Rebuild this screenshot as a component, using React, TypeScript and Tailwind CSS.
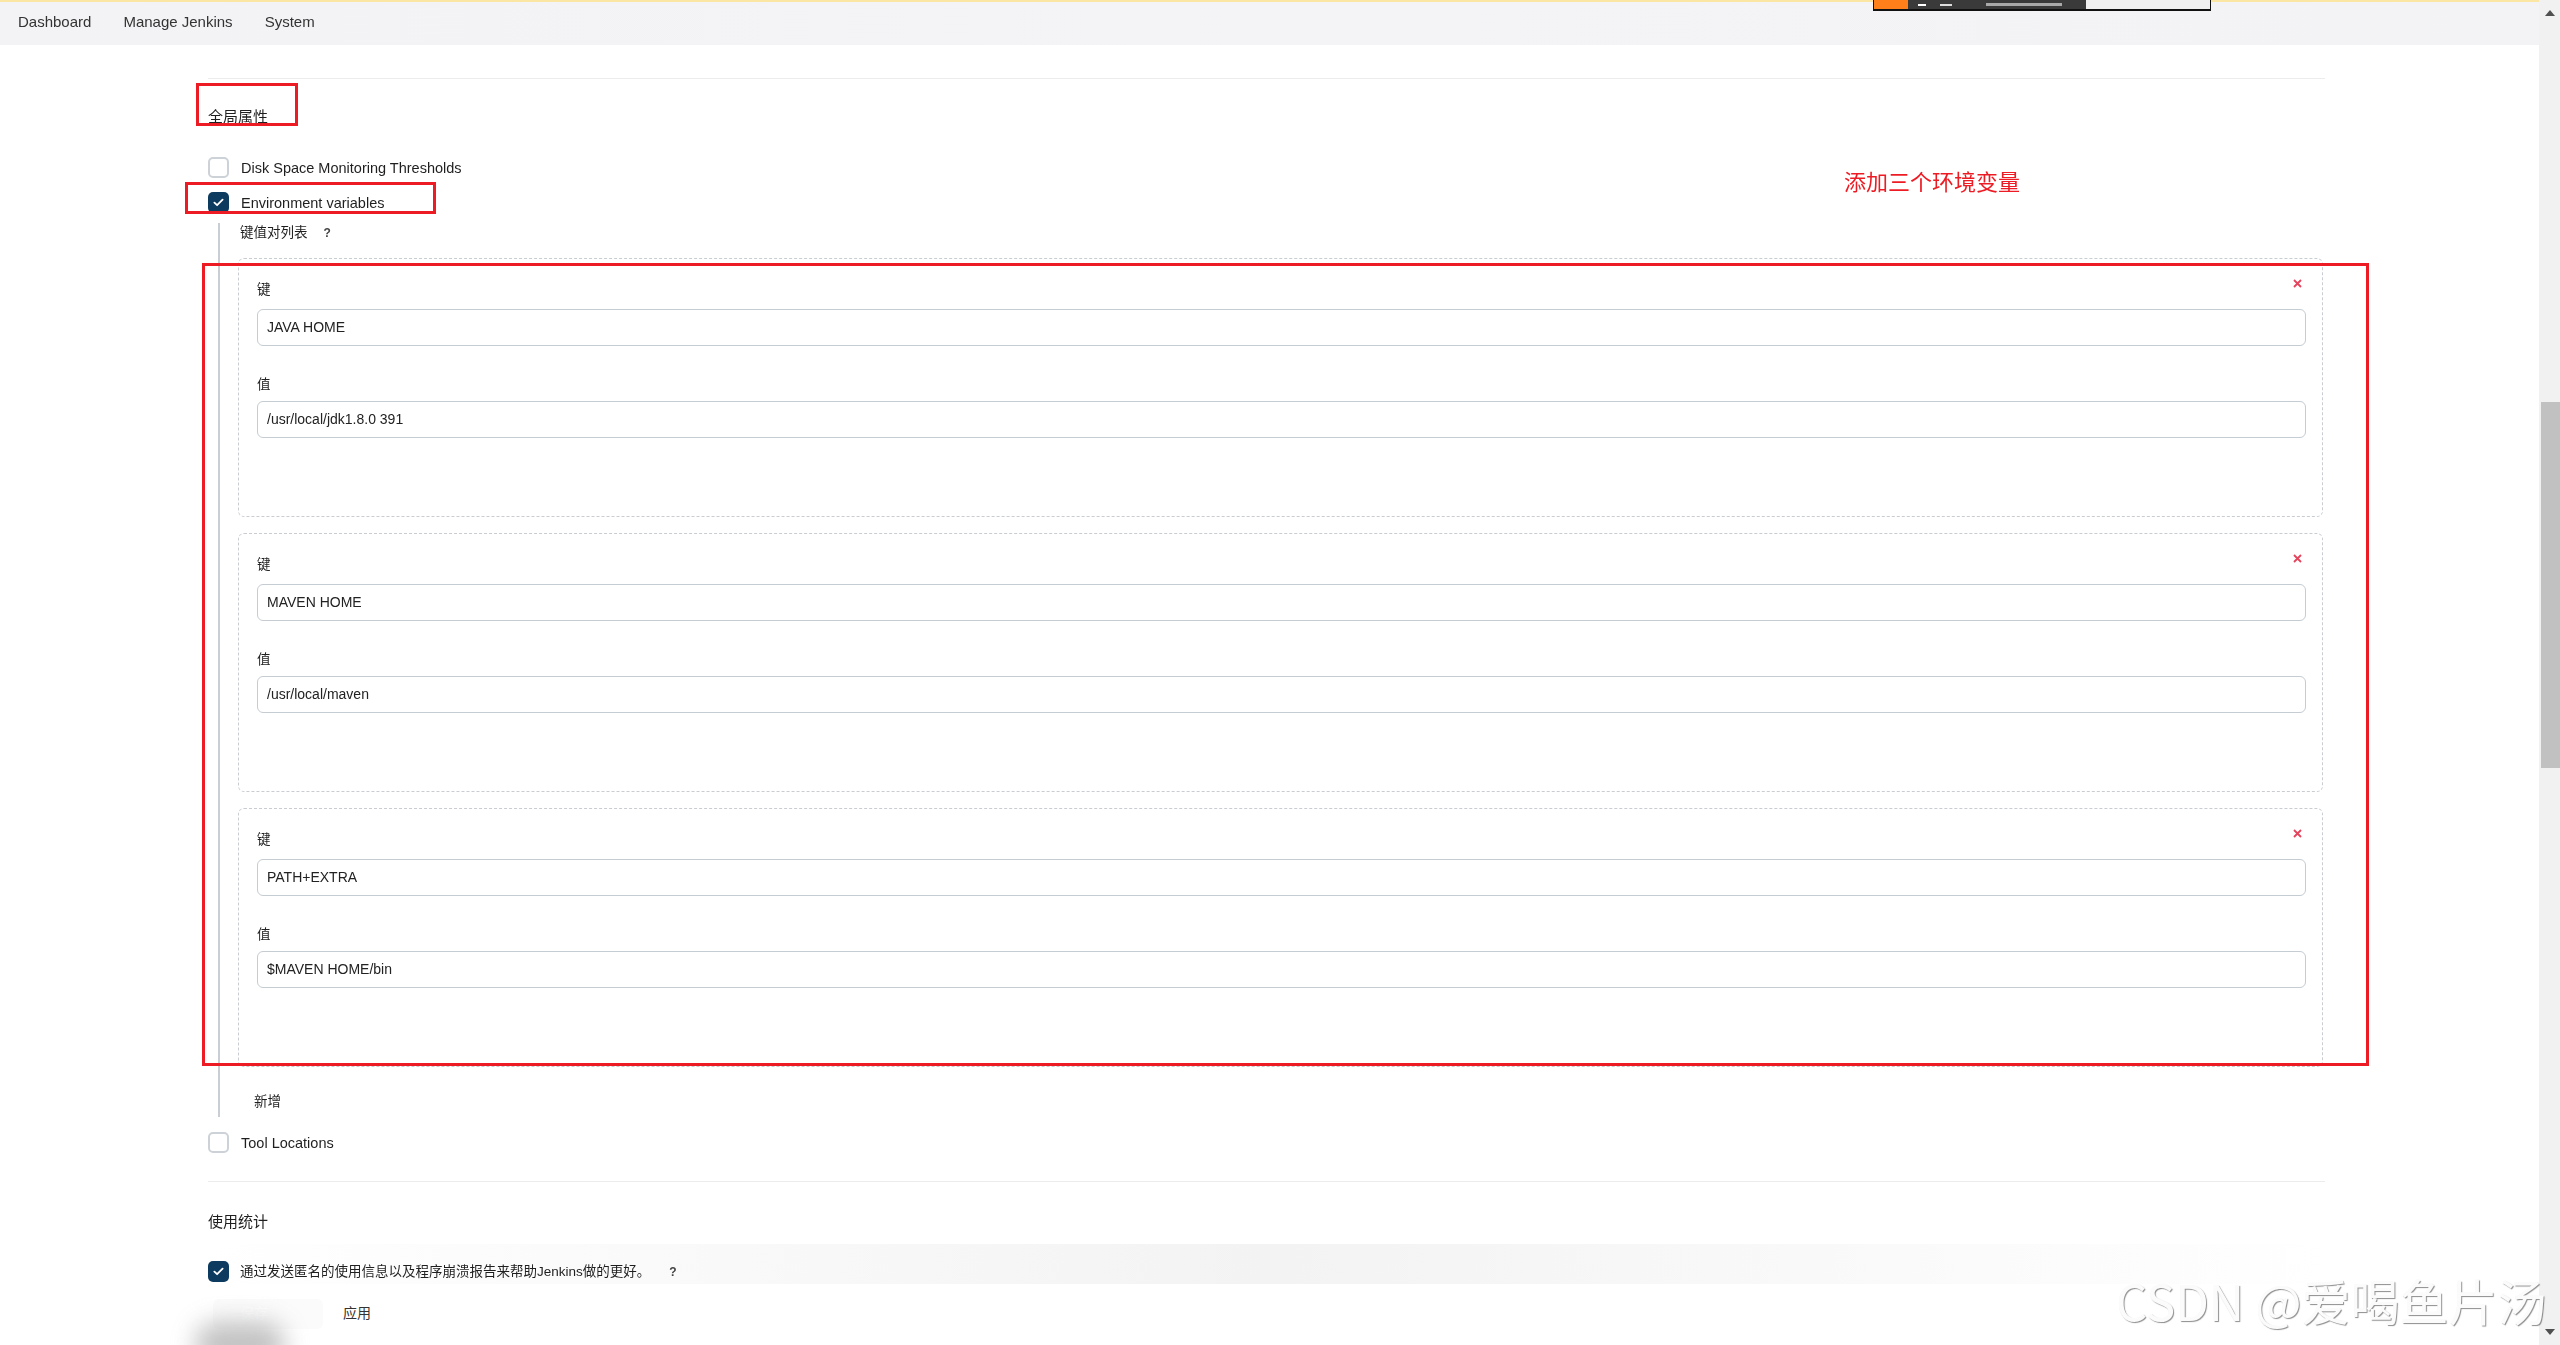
import React from "react";

type EnvVar = { key: string; value: string };

const envVars: EnvVar[] = [
  { key: "JAVA HOME", value: "/usr/local/jdk1.8.0 391" },
  { key: "MAVEN HOME", value: "/usr/local/maven" },
  { key: "PATH+EXTRA", value: "$MAVEN HOME/bin" },
];

function Checkbox({ checked }: { checked?: boolean }) {
  if (checked) {
    return (
      <span className="flex h-[21px] w-[21px] shrink-0 items-center justify-center rounded-[5px] bg-[#0d3b5f]">
        <svg width="11" height="9" viewBox="0 0 11 9" fill="none">
          <path d="M1.4 4.7 4.1 7.2 9.6 1.6" stroke="white" strokeWidth="1.8" strokeLinecap="round" strokeLinejoin="round" />
        </svg>
      </span>
    );
  }
  return <span className="h-[21px] w-[21px] shrink-0 rounded-[5px] border-2 border-[#ccd2d7] bg-white" />;
}

function Field({ label, value, gap }: { label: string; value: string; gap: string }) {
  return (
    <>
      <div className="h-[20px] text-[13.5px] leading-[20px] text-[#222]">{label}</div>
      <div className={`${gap} flex h-[37px] items-center rounded-[6px] border border-[#c5ccd2] bg-white px-[9px] text-[14px] text-[#222]`}>
        {value}
      </div>
    </>
  );
}

function EnvCard({ item }: { item: EnvVar }) {
  return (
    <div className="relative h-[259px] rounded-[6px] border border-dashed border-[#c9cdd1] pl-[18px] pr-[16px] pt-[21px]">
      {/* delete */}
      <svg className="absolute right-[20px] top-[20px]" width="9" height="9" viewBox="0 0 9 9">
        <path d="M1 1 8 8M8 1 1 8" stroke="#e5445c" strokeWidth="1.8" />
      </svg>
      <Field label="键" value={item.key} gap="mt-[9px]" />
      <div className="h-[29px]" />
      <Field label="值" value={item.value} gap="mt-[6px]" />
    </div>
  );
}

export default function App() {
  return (
    <div className="relative flex h-[1345px] w-[2560px] overflow-hidden bg-white font-['Liberation_Sans','Noto_Sans_CJK_SC',sans-serif] text-[#1f1f1f]">
      {/* Page */}
      <div className="flex min-w-0 flex-1 flex-col">
        {/* Breadcrumbs */}
        <div className="flex h-[45px] shrink-0 flex-col bg-gradient-to-r from-[#f3f3f5] via-[#f4f4f6] to-[#f3f3f5]">
          <div className="h-[2px] bg-[#fbe7a3]" />
          <div className="flex flex-1 items-center gap-[32px] pb-[2px] pl-[18px] text-[15px] text-[#333]">
            <span>Dashboard</span>
            <span>Manage Jenkins</span>
            <span>System</span>
          </div>
        </div>

        <div className="pl-[208px] pr-[214px] pt-[33px]">
          {/* 全局属性 */}
          <div className="border-t border-[#ececec] pt-[28px]">
            <div className="h-[20px] text-[15px] leading-[20px]">全局属性</div>

            <div className="mt-[30px] flex h-[21px] items-center gap-[12px] text-[14.5px] leading-[20px]">
              <Checkbox />
              <span>Disk Space Monitoring Thresholds</span>
            </div>
            <div className="mt-[14px] flex h-[21px] items-center gap-[12px] text-[14.5px] leading-[20px]">
              <Checkbox checked />
              <span>Environment variables</span>
            </div>

            <div className="ml-[10px] mt-[10px] border-l-2 border-[#c8ced3] pb-[5px] pl-[18px] pr-[2px]">
              <div className="flex h-[20px] items-center gap-[16px] pl-[2px] text-[13.5px] leading-[20px]">
                <span>键值对列表</span>
                <span className="text-[12px] font-bold text-[#444]">?</span>
              </div>
              <div className="mt-[15px] flex flex-col gap-[16px]">
                {envVars.map((v) => (
                  <EnvCard key={v.key} item={v} />
                ))}
              </div>
              <div className="mt-[25px] h-[20px] pl-[16px] text-[13.5px] leading-[20px]">新增</div>
            </div>

            <div className="mt-[15px] flex h-[21px] items-center gap-[12px] text-[14.5px] leading-[20px]">
              <Checkbox />
              <span>Tool Locations</span>
            </div>
          </div>

          {/* 使用统计 */}
          <div className="mt-[28px] border-t border-[#ececec] pt-[30px]">
            <div className="h-[20px] text-[15px] leading-[20px]">使用统计</div>
            <div className="mt-[29px] flex h-[21px] items-center gap-[11px] text-[13.5px] leading-[20px]">
              <Checkbox checked />
              <span>通过发送匿名的使用信息以及程序崩溃报告来帮助Jenkins做的更好。</span>
              <span className="ml-[8px] text-[12px] font-bold text-[#444]">?</span>
            </div>
          </div>
        </div>
      </div>

      {/* Scrollbar */}
      <div className="flex w-[21px] shrink-0 flex-col bg-[#f1f1f1]">
        <div className="flex h-[26px] items-center justify-center">
          <span className="h-0 w-0 border-x-[5px] border-b-[6px] border-x-transparent border-b-[#505050]" />
        </div>
        <div className="ml-[2px] mt-[376px] h-[366px] bg-[#c1c1c1]" />
        <div className="flex-1" />
        <div className="flex h-[26px] items-center justify-center">
          <span className="h-0 w-0 border-x-[5px] border-t-[6px] border-x-transparent border-t-[#505050]" />
        </div>
      </div>

      {/* Sticky bottom bar */}
      <div className="absolute left-[200px] top-[1244px] h-[40px] w-[2140px] bg-gradient-to-r from-white via-[#f3f3f3] to-white mix-blend-multiply" />
      <div className="absolute bottom-0 left-0 flex h-[61px] w-[2539px] items-center bg-white pb-[2px] pl-[213px]">
        <div className="flex h-[30px] w-[110px] items-center rounded-[6px] bg-[#fbfbfb] pl-[27px] text-[14px] text-white">保存</div>
        <span className="ml-[20px] text-[14px] text-[#333]">应用</span>
      </div>
      <div className="absolute left-[195px] top-[1322px] h-[44px] w-[90px] rounded-full bg-[#a9a9a9] opacity-70 blur-[12px]" />

      {/* Screenshot tool overlay */}
      <div className="absolute left-[1873px] top-0 flex h-[11px] w-[338px] border-b-2 border-[#111] bg-[#111] px-[1px]">
        <div className="w-[34px] bg-[#ff7f1a]" />
        <div className="flex flex-1 items-center gap-[14px] bg-[#3a3a3a] pl-[10px]">
          <span className="h-[2px] w-[8px] bg-white" />
          <span className="h-[2px] w-[12px] bg-[#ddd]" />
          <span className="ml-[20px] h-[3px] w-[76px] bg-[#d8d8d8] opacity-70" />
        </div>
        <div className="w-[124px] bg-[#efefef]" />
      </div>

      {/* Annotations */}
      <div className="absolute left-[196px] top-[83px] h-[43px] w-[102px] border-[3px] border-[#ed1c24]" />
      <div className="absolute left-[185px] top-[182px] h-[32px] w-[251px] border-[3px] border-[#ed1c24]" />
      <div className="absolute left-[202px] top-[263px] h-[803px] w-[2167px] border-[3px] border-[#ed1c24]" />
      <div className="absolute left-[1844px] top-[169px] text-[22px] leading-[28px] text-[#ed1c24]">添加三个环境变量</div>

      {/* Watermark */}
      <div className="absolute left-[2116px] top-[1268px] whitespace-nowrap font-['Noto_Sans_CJK_SC',sans-serif] text-[49px] leading-[64px] text-[#fbfbfb] [text-shadow:1px_1px_1px_rgba(0,0,0,0.45)]">
        CSDN @爱喝鱼片汤
      </div>
    </div>
  );
}
